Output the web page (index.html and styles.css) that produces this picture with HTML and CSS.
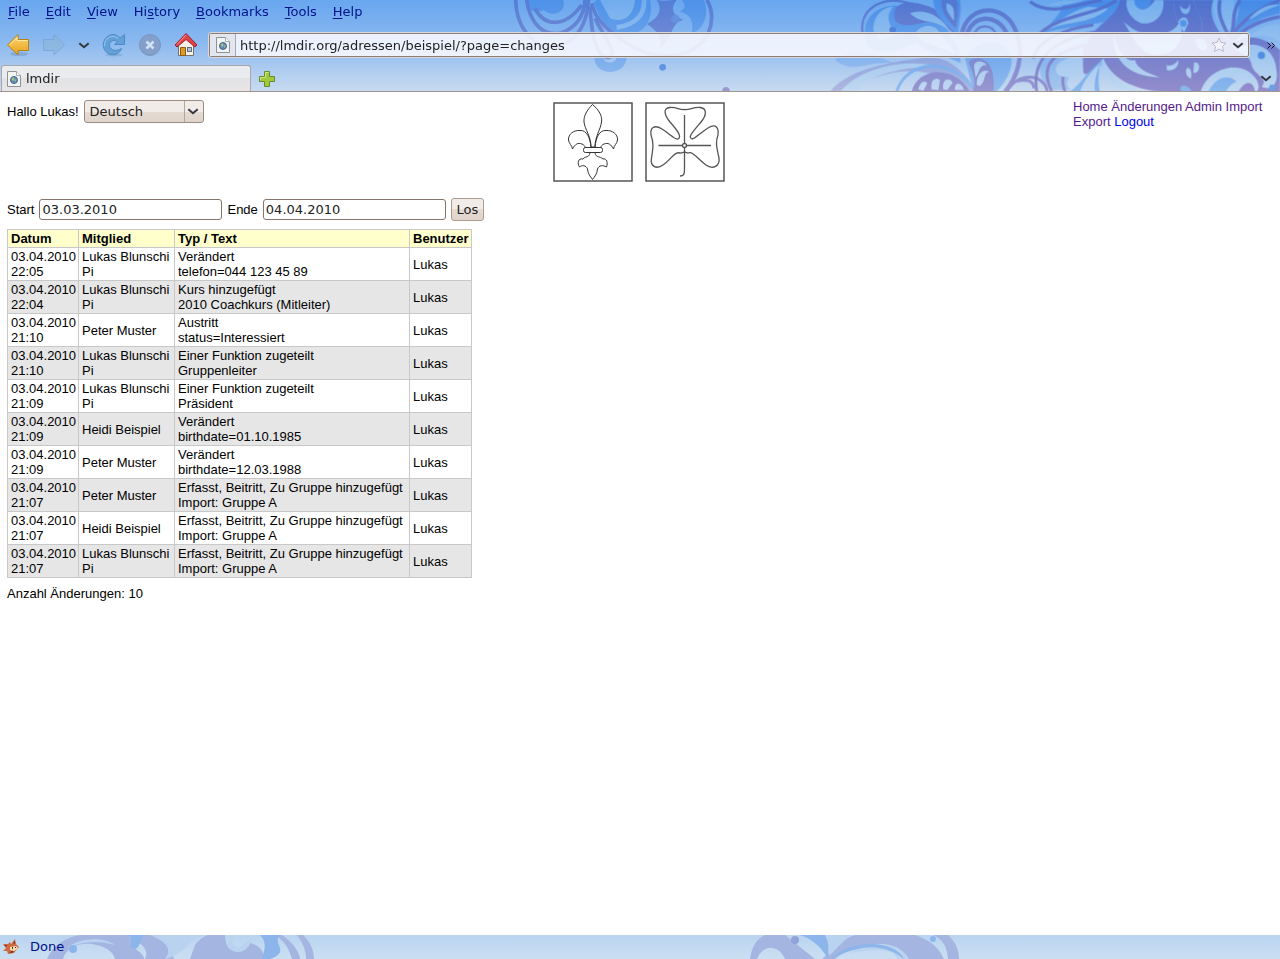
FILE: index.html
```html
<!DOCTYPE html>
<html lang="de">
<head>
    <meta charset="UTF-8">
    <meta name="viewport" content="width=device-width, initial-scale=1.0">
    <title>lmdir</title>
    <link rel="stylesheet" href="styles.css">
</head>
<body>
    <svg width="0" height="0" class="defs">
        <defs>
            <linearGradient id="indigo" gradientUnits="userSpaceOnUse" x1="0" y1="0" x2="0" y2="275">
                <stop offset="0" stop-color="#4a68c8"/><stop offset="1" stop-color="#8a7fc6"/>
            </linearGradient>
            <linearGradient id="blue" gradientUnits="userSpaceOnUse" x1="0" y1="0" x2="0" y2="275">
                <stop offset="0" stop-color="#3f86e6"/><stop offset="1" stop-color="#80b2ee"/>
            </linearGradient>
            <linearGradient id="pale" gradientUnits="userSpaceOnUse" x1="0" y1="0" x2="0" y2="275">
                <stop offset="0" stop-color="#76b0ee"/><stop offset="1" stop-color="#c0d8f2"/>
            </linearGradient>
            <linearGradient id="gold" x1="0" y1="0" x2="0" y2="1">
                <stop offset="0" stop-color="#fbd66e"/><stop offset="1" stop-color="#e8a21c"/>
            </linearGradient>
            <symbol id="chevron" viewBox="0 0 10 6">
                <path d="M1 1 L5 4.5 L9 1" fill="none" stroke="#33383f" stroke-width="1.700"/>
            </symbol>
            <symbol id="page" viewBox="0 0 16 18">
                <path d="M1.500 1.500 H10.500 L14.500 5.500 V16.500 H1.500 Z" fill="#f2f4f4" stroke="#8b9396"/>
                <path d="M10.500 1.500 V5.500 H14.500" fill="#fff" stroke="#a3aaac"/>
                <circle cx="8" cy="10" r="3.500" fill="#6189bd" stroke="#4c678c"/>
                <path d="M5.500 9 L7.500 7 L8.500 9 L7 11 Z M8.500 10 L10.500 9 L9.500 12 Z" fill="#a9c977"/>
            </symbol>
        </defs>
    </svg>

    <header class="chrome">
        <svg class="ornament" viewBox="480 0 800 92" preserveAspectRatio="xMaxYMin slice" aria-hidden="true">
            <!-- flower hanging down in the middle -->
            <g transform="translate(500) scale(.3333)" opacity=".65" fill="none">
                <path d="M75 0 H190 C200 45 150 50 130 30 C105 45 80 30 75 0 Z" fill="url(#blue)"/>
                <path d="M290 0 H450 C465 75 420 105 360 115 C320 100 300 50 280 10 Z" fill="url(#blue)"/>
                <path d="M300 0 H405 C400 50 370 70 330 55 Z" fill="url(#pale)"/>
                <path d="M350 82 C410 75 435 40 432 0" stroke="url(#pale)" stroke-width="14"/>
                <g stroke="url(#indigo)" stroke-width="11">
                    <path d="M47 0 C50 90 110 160 185 135 C245 112 262 55 265 0"/>
                    <path d="M80 0 C90 70 130 112 185 98 C235 80 252 40 255 0"/>
                    <path d="M105 25 C130 75 190 90 245 15"/>
                    <path d="M275 10 C285 60 330 100 390 135 C460 180 580 185 625 100 C640 65 638 25 620 0"/>
                    <path d="M270 20 C275 100 285 170 325 173 C360 165 305 100 285 55"/>
                </g>
                <path d="M470 0 C495 5 510 0 530 0 C515 20 510 40 550 60 C515 65 520 110 480 145 C490 115 470 90 440 72 C475 55 490 30 470 0 Z" fill="url(#indigo)"/>
                <path d="M545 0 H610 C630 30 615 90 575 100 C585 60 565 40 540 35 C560 25 555 10 545 0 Z" fill="url(#blue)"/>
                <circle cx="526" cy="57" r="13" fill="#5b83d5"/>
                <path d="M283 173 C285 230 375 230 380 173 H350 C345 195 310 190 310 173 Z" fill="url(#blue)"/>
                <circle cx="488" cy="202" r="10" fill="#3977de"/>
                <path d="M667 275 C665 256 690 256 690 275 Z" fill="#8177bd"/>
            </g>
            <!-- small flower -->
            <g transform="translate(830) scale(.3333)" opacity=".75" fill="none">
                <path d="M105 100 C100 30 180 0 250 25 C320 40 350 70 370 130 C280 90 230 160 170 150 C120 160 100 130 105 100 Z" fill="url(#blue)"/>
                <path d="M198 65 C180 25 210 0 260 10 C315 20 360 45 380 105 L340 75 C280 50 240 95 198 65 Z" fill="url(#indigo)"/>
                <path d="M240 40 C290 20 340 55 360 95 C320 55 275 75 240 40 Z M130 90 C130 45 160 20 190 20 C165 45 175 80 205 105 C160 110 155 140 130 90 Z" fill="url(#pale)"/>
                <path d="M98 100 C85 25 160 -15 240 10 C320 18 360 60 385 110" stroke="url(#indigo)" stroke-width="7"/>
                <path d="M310 0 H390 C397 40 385 70 384 105 C350 75 310 45 310 0 Z" fill="url(#blue)"/>
                <path d="M335 0 H380 C390 35 380 60 378 85 C350 60 330 30 335 0 Z" fill="url(#indigo)"/>
                <path d="M350 10 C375 15 372 35 372 62 C358 45 345 30 350 10 Z" fill="url(#pale)"/>
                <path d="M235 105 C265 50 330 60 350 100 C380 125 390 145 392 190 C340 160 290 170 235 105 Z" fill="url(#blue)"/>
                <path d="M255 100 C280 65 320 75 330 100 C345 120 360 130 375 165 C330 130 290 145 255 100 Z" fill="url(#pale)"/>
                <path d="M395 105 C410 10 530 5 560 100 C585 165 560 235 525 275" stroke="url(#indigo)" stroke-width="13"/>
                <path d="M410 110 C420 45 500 35 530 100" stroke="url(#indigo)" stroke-width="13"/>
                <path d="M430 110 C440 70 485 70 500 105" stroke="url(#indigo)" stroke-width="7"/>
                <path d="M405 175 C450 100 545 120 545 185 C540 230 520 250 500 275 H430 Z" fill="url(#blue)"/>
                <path d="M15 180 C60 140 130 160 190 190 C110 180 70 225 15 180 Z" fill="url(#blue)" opacity=".6"/>
                <path d="M0 275 C60 200 200 185 300 170 C360 175 405 215 440 275 H395 C350 215 240 200 160 225 C110 240 70 260 50 275 Z" fill="url(#indigo)" opacity=".5"/>
                <path d="M30 275 C110 185 260 180 320 200 C250 200 130 210 80 275 Z" fill="url(#pale)"/>
                <path d="M200 275 C230 175 370 175 425 262" stroke="url(#blue)" stroke-width="9"/>
                <path d="M245 275 C260 205 370 190 420 275 Z" fill="url(#indigo)"/>
                <path d="M265 268 C270 245 285 240 292 250 L280 272 Z M305 268 C300 238 318 230 330 240 L325 270 Z M340 268 C335 235 360 232 368 248 L352 270 Z M375 270 C372 245 395 245 402 270 Z" fill="url(#pale)"/>
                <path d="M415 185 C450 160 500 180 490 275 H430 C440 240 425 210 415 185 Z" fill="url(#indigo)"/>
                <path d="M432 200 C432 180 460 180 470 195 C445 195 450 215 437 232 Z M440 255 C440 220 460 205 478 215 C458 220 470 240 450 258 Z" fill="url(#pale)"/>
                <path d="M530 275 C560 215 645 220 652 275 M550 245 C590 235 610 240 612 265" stroke="url(#indigo)" stroke-width="9"/>
                <circle cx="188" cy="90" r="10" fill="#4272d2"/>
            </g>
            <!-- large flower in the right corner -->
            <g transform="translate(1030) scale(.3333)" opacity=".85" fill="none">
                <path d="M90 0 H290 L240 60 C180 80 130 75 35 100 C80 50 110 25 90 0 Z" fill="url(#blue)"/>
                <path d="M175 20 C130 30 90 60 55 88 C120 60 180 75 235 25 Z M100 0 H170 C120 15 80 20 45 18 Z" fill="url(#pale)"/>
                <path d="M0 5 C60 50 130 15 215 0 M30 100 C100 40 190 50 260 0" stroke="url(#indigo)" stroke-width="10"/>
                <path d="M40 170 C130 150 190 110 235 40 L215 200 C160 170 80 245 125 270 H70 C30 250 20 210 40 170 Z" fill="url(#blue)" opacity=".5"/>
                <path d="M10 175 C20 120 110 85 190 75 M20 275 C5 180 60 120 200 95 M65 275 C20 180 90 150 190 130 M105 275 C80 210 130 170 205 165" stroke="url(#indigo)" stroke-width="9"/>
                <path d="M180 160 C130 170 60 180 82 222 C105 238 105 225 118 232 C150 225 165 205 180 160 Z" fill="url(#pale)"/>
                <path d="M210 170 C180 205 165 240 120 275 H210 C200 235 210 210 210 170 Z" fill="url(#blue)"/>
                <path d="M210 190 C170 225 160 250 150 275 H195 C190 245 200 220 210 190 Z" fill="url(#pale)"/>
                <path d="M270 0 H430 C430 50 455 110 500 115 C540 80 495 30 490 0 H550 C530 45 565 110 610 130 C650 100 700 110 750 150 V275 H420 C340 275 250 250 220 175 C165 220 155 265 160 150 C190 70 260 60 270 0 Z" fill="url(#indigo)"/>
                <path d="M220 175 C235 250 310 275 400 275 H280 C240 250 220 225 220 175 Z" fill="url(#pale)"/>
                <path d="M430 0 H490 C495 30 540 80 500 115 C455 110 430 50 430 0 Z" fill="url(#indigo)"/>
                <path d="M280 65 C310 110 320 150 365 163 C430 175 470 125 450 60 C440 100 385 110 345 100 C310 95 295 75 280 65 Z" fill="url(#pale)"/>
                <path d="M250 95 C245 170 285 230 390 232 C350 220 320 205 315 180 C285 190 255 140 250 95 Z M410 195 C420 200 435 195 445 180 C448 205 425 215 410 210 Z" fill="url(#pale)"/>
                <path d="M290 0 H325 C320 30 350 40 375 0 H400 C405 50 370 75 335 70 C305 60 285 30 290 0 Z" fill="url(#pale)"/>
                <circle cx="338" cy="4" r="25" fill="url(#blue)"/>
                <path d="M450 15 C455 30 480 35 478 8 C490 50 450 55 450 15 Z M445 65 C455 45 475 50 475 70 L462 98 Z M495 120 C515 110 535 125 530 145 C515 160 500 145 495 120 Z M470 205 C480 200 487 215 483 235 C468 230 465 215 470 205 Z M492 188 C515 180 510 225 490 218 Z" fill="url(#pale)"/>
                <circle cx="460" cy="70" r="10" fill="url(#blue)"/>
                <path d="M550 0 H610 C620 50 600 90 590 110 C570 75 545 40 550 0 Z" fill="url(#pale)"/>
                <path d="M625 0 H750 V40 C700 50 650 70 610 120 C605 80 635 40 625 0 Z" fill="url(#blue)"/>
                <path d="M570 0 C560 45 580 75 600 115 C620 70 600 45 630 0 M600 115 C635 60 680 30 750 0 M605 125 C650 75 700 60 750 50" stroke="url(#indigo)" stroke-width="11"/>
                <path d="M655 60 C680 30 710 10 750 15 C700 30 680 50 655 60 Z" fill="url(#pale)"/>
                <path d="M650 115 C685 85 715 72 750 72 V125 C720 105 685 100 650 115 Z" fill="url(#pale)"/>
                <path d="M615 148 C660 120 735 130 740 215 C745 250 725 275 695 260 C720 235 670 225 665 195 C660 165 635 160 615 148 Z" fill="url(#pale)"/>
                <circle cx="694" cy="166" r="11" fill="#4784e0"/>
                <circle cx="727" cy="263" r="10" fill="#5e95e5"/>
                <path d="M512 275 C535 200 640 175 680 240 C690 260 685 270 680 275 Z" fill="url(#pale)"/>
                <path d="M535 275 C560 225 600 225 620 245 C605 250 590 265 590 275 Z" fill="url(#blue)"/>
                <path d="M625 275 C645 240 670 240 675 275 Z" fill="url(#indigo)"/>
                <path d="M455 275 C440 255 470 245 485 275 Z" fill="url(#blue)"/>
            </g>
        </svg>

        <nav class="menubar">
            <button><u>F</u>ile</button>
            <button><u>E</u>dit</button>
            <button><u>V</u>iew</button>
            <button>Hi<u>s</u>tory</button>
            <button><u>B</u>ookmarks</button>
            <button><u>T</u>ools</button>
            <button><u>H</u>elp</button>
        </nav>

        <div class="toolbar">
            <button class="tool" aria-label="Back">
                <svg width="24" height="24" viewBox="0 0 24 24"><ellipse cx="13" cy="21" rx="9" ry="2" fill="#49699a" opacity=".25"/><path d="M1.500 12 L12 1.500 V6.500 H22.500 V17.500 H12 V22 Z" fill="url(#gold)" stroke="#b98012"/><path d="M3.500 12 L11 4.500 V7.500 H21.500" fill="none" stroke="#fdeaa8"/></svg>
            </button>
            <button class="tool" aria-label="Forward">
                <svg width="24" height="24" viewBox="0 0 24 24" opacity=".65"><path d="M22.500 12 L12 1.500 V6.500 H1.500 V17.500 H12 V22 Z" fill="#8bb5d9" stroke="#719fc9"/></svg>
            </button>
            <button class="tool narrow" aria-label="Recent pages">
                <svg width="12" height="7"><use href="#chevron"/></svg>
            </button>
            <button class="tool" aria-label="Reload">
                <svg width="24" height="24" viewBox="0 0 24 24"><ellipse cx="12" cy="22" rx="9" ry="1.500" fill="#49699a" opacity=".2"/><path d="M18 5 L22.500 1.500 V11.500 H12.500 L15.500 8.500 C11 5.500 7 9 7.500 13 C8.500 18 15 18.500 19.500 15.500 C18 21 11 23.500 6 20.500 C-1 16 0 6 7 2.500 C11 .5 15 1.500 18 5 Z" fill="#62a0d7" stroke="#4c8cc6"/><path d="M2.500 13 C2 5 10 .5 16.500 5.500" fill="none" stroke="#9bc6ea"/></svg>
            </button>
            <button class="tool" aria-label="Stop">
                <svg width="24" height="24" viewBox="0 0 24 24"><circle cx="12" cy="12" r="10.500" fill="#839fca" stroke="#7895c3"/><path d="M8.500 8.500 L15.500 15.500 M15.500 8.500 L8.500 15.500" stroke="#d3e3f7" stroke-width="2.500"/></svg>
            </button>
            <button class="tool" aria-label="Home">
                <svg width="24" height="24" viewBox="0 0 24 24"><path d="M4.500 9 L12 3 L19.500 9 V22.500 H4.500 Z" fill="#f1f0eb" stroke="#77736a"/><path d="M6.500 14.500 H11.500 V22.500 H6.500 Z" fill="#dd9825" stroke="#8e5c13"/><rect x="13.500" y="14.500" width="4" height="4" fill="#a9c4e0" stroke="#686d70"/><path d="M12 .5 L23 12 L21 14 L12 6.500 L3 14 L1 12 Z" fill="#df4347" stroke="#a51d24"/><path d="M12 2 L3 11.500" stroke="#f59595"/></svg>
            </button>
            <div class="location">
                <span class="site"><svg width="16" height="18"><use href="#page"/></svg></span>
                <input type="text" aria-label="Location" value="http://lmdir.org/adressen/beispiel/?page=changes">
                <svg width="16" height="16" viewBox="0 0 16 16"><path d="M8 1 L10 5.500 L15 6 L11.500 9.500 L12.500 14.500 L8 12 L3.500 14.500 L4.500 9.500 L1 6 L6 5.500 Z" fill="#f1f2fa" stroke="#b9bbcb"/></svg>
                <svg width="12" height="7"><use href="#chevron"/></svg>
            </div>
            <button class="overflow" aria-label="More">
                <svg width="8" height="7" viewBox="0 0 8 7"><path d="M.5 .5 L3.500 3.500 L.5 6.500 M4.500 .5 L7.500 3.500 L4.500 6.500" fill="none" stroke="#111"/></svg>
            </button>
        </div>

        <div class="tabs">
            <button class="tab"><svg width="16" height="18"><use href="#page"/></svg>lmdir</button>
            <button class="new-tab" aria-label="New tab">
                <svg width="16" height="16" viewBox="0 0 16 16"><path d="M5.500 .5 H10.500 V5.500 H15.500 V10.500 H10.500 V15.500 H5.500 V10.500 H.5 V5.500 H5.500 Z" fill="#a3c93a" stroke="#648c2c"/><path d="M6.500 6.500 V1.500 H9.500 M1.500 9 V6.500 H6" fill="none" stroke="#d3e58b"/></svg>
            </button>
            <button class="all-tabs" aria-label="List all tabs">
                <svg width="12" height="7"><use href="#chevron"/></svg>
            </button>
        </div>
    </header>

    <main>
        <div class="top">
            <div class="greeting">
                <label for="language">Hallo Lukas!</label>
                <div class="dropdown">
                    <select id="language"><option>Deutsch</option></select>
                    <svg width="12" height="7"><use href="#chevron"/></svg>
                </div>
            </div>
            <div class="logos">
                <svg width="80" height="80" viewBox="0 0 80 80" fill="none" stroke="#333">
                    <rect x="1" y="1" width="78" height="78" stroke="#555" stroke-width="1.500"/>
                    <path d="M39.500 2.500 C46 8 49.500 14 48.500 20 C47.500 28 42 34 42 45 H38 C38 34 32 28 31 20 C30.500 14 34 8 39.500 2.500 Z"/>
                    <path d="M38 45 C37 36 34 28 27 28.500 C21 28 15 32 15.500 38 C16 42 19 43 19.500 47 C22 42 25 40.500 29 42 C31 43 32 44 32.500 46"/>
                    <path d="M42 45 C43 36 46 28 53 28.500 C59 28 65 32 64.500 38 C64 42 61 43 60.500 47 C58 42 55 40.500 51 42 C49 43 48 44 47.500 46"/>
                    <rect x="30.500" y="45.500" width="19" height="5" rx="2"/>
                    <path d="M37 51 C36 56 32 54 30 57 C25 56 24 61 26.500 65 C29 63 33 63 34.500 67 C35 72 37 74 39.500 77.500 C42 74 44 72 44.500 67 C46 63 50 63 53.500 65 C55 61 54 56 50 57 C47 54 43 56 42 51"/>
                </svg>
                <svg width="80" height="80" viewBox="0 0 80 80" fill="none" stroke="#555" stroke-width="1.300">
                    <rect x="1" y="1" width="78" height="78" stroke="#555" stroke-width="1.500"/>
                    <path d="M33 37 C37 35 33 29 25 20 C20 14 17 6 25 5.500 C32 5 34 8 39.500 7.500 C45 8 48 5 55 5.500 C62 6 62 13 56 20 C46 32 43 35 47 37 C50 37 55 31 63 26 C71 21 74 26 73 33 C70 41 72 46 74 56 C75 64 68 68 61 63 C53 57 48 49 43 51 L39.500 50 L36 51 C29 49 26 58 18 63 C11 68 5 64 6.500 56 C8 46 9 41 6 33 C5 26 9 22 17 27 C25 32 30 38 33 37 Z"/>
                    <path d="M39.500 13 V67 C39.500 72 39 74 35 74 M13.500 43.500 H66"/>
                    <circle cx="39.500" cy="43.500" r="2" fill="#fff"/>
                </svg>
            </div>
            <nav class="links">
                <a class="visited" href="#home">Home</a>
                <a class="visited" href="#changes">Änderungen</a>
                <a class="visited" href="#admin">Admin</a>
                <a class="visited" href="#import">Import</a>
                <a class="visited" href="#export">Export</a>
                <a href="#logout">Logout</a>
            </nav>
        </div>

        <form class="range">
            <label for="start">Start</label>
            <input type="text" id="start" value="03.03.2010">
            <label for="end">Ende</label>
            <input type="text" id="end" value="04.04.2010">
            <button type="button">Los</button>
        </form>

        <table>
            <thead>
                <tr><th class="date">Datum</th><th class="member">Mitglied</th><th class="text">Typ / Text</th><th class="user">Benutzer</th></tr>
            </thead>
            <tbody>
                <tr><td>03.04.2010 22:05</td><td>Lukas Blunschi<br>Pi</td><td>Verändert<br>telefon=044 123 45 89</td><td>Lukas</td></tr>
                <tr><td>03.04.2010 22:04</td><td>Lukas Blunschi<br>Pi</td><td>Kurs hinzugefügt<br>2010 Coachkurs (Mitleiter)</td><td>Lukas</td></tr>
                <tr><td>03.04.2010 21:10</td><td>Peter Muster</td><td>Austritt<br>status=Interessiert</td><td>Lukas</td></tr>
                <tr><td>03.04.2010 21:10</td><td>Lukas Blunschi<br>Pi</td><td>Einer Funktion zugeteilt<br>Gruppenleiter</td><td>Lukas</td></tr>
                <tr><td>03.04.2010 21:09</td><td>Lukas Blunschi<br>Pi</td><td>Einer Funktion zugeteilt<br>Präsident</td><td>Lukas</td></tr>
                <tr><td>03.04.2010 21:09</td><td>Heidi Beispiel</td><td>Verändert<br>birthdate=01.10.1985</td><td>Lukas</td></tr>
                <tr><td>03.04.2010 21:09</td><td>Peter Muster</td><td>Verändert<br>birthdate=12.03.1988</td><td>Lukas</td></tr>
                <tr><td>03.04.2010 21:07</td><td>Peter Muster</td><td>Erfasst, Beitritt, Zu Gruppe hinzugefügt<br>Import: Gruppe A</td><td>Lukas</td></tr>
                <tr><td>03.04.2010 21:07</td><td>Heidi Beispiel</td><td>Erfasst, Beitritt, Zu Gruppe hinzugefügt<br>Import: Gruppe A</td><td>Lukas</td></tr>
                <tr><td>03.04.2010 21:07</td><td>Lukas Blunschi<br>Pi</td><td>Erfasst, Beitritt, Zu Gruppe hinzugefügt<br>Import: Gruppe A</td><td>Lukas</td></tr>
            </tbody>
        </table>
        <p>Anzahl Änderungen: 10</p>
    </main>

    <footer class="statusbar">
        <svg class="ornament" viewBox="0 0 1280 24" preserveAspectRatio="xMinYMin slice" aria-hidden="true">
            <g fill="#a3b5e0">
                <path d="M47 24 C55 5 75 -3 100 0 H192 C180 8 170 16 174 24 H145 C150 14 140 8 130 0 C128 14 145 17 144 24 H115 C112 8 70 0 63 24 Z"/>
                <path d="M195 10 C205 -3 215 -2 225 0 C225 16 235 22 250 8 C260 10 265 18 264 24 H190 Z"/>
                <path d="M275 0 H282 C293 8 299 16 300 24 H292 C289 14 285 6 275 0 Z M297 0 H303 C311 8 314 16 314 24 H306 C306 16 303 8 297 0 Z"/>
                <path d="M750 24 C752 10 758 3 765 0 H785 C795 8 805 16 815 24 H785 C778 8 762 10 757 24 Z"/>
                <path d="M822 24 C838 10 845 3 855 0 H915 C935 7 940 16 944 24 H905 C900 5 850 10 835 24 Z M934 0 H948 C957 8 959 17 959 24 H948 C947 12 944 6 934 0 Z"/>
            </g>
            <g fill="#b9d2ef">
                <path d="M67 13 C80 2 104 2 115 10 C95 4 80 8 67 13 Z M150 0 H205 C185 5 190 17 165 24 C175 12 160 4 150 0 Z M233 0 C230 12 238 18 251 2 C252 15 236 24 227 10 Z"/>
                <path d="M806 0 H850 L830 20 Z M850 18 C870 4 900 6 909 24 H898 C890 10 865 16 850 18 Z"/>
            </g>
            <g fill="#8cb5ec">
                <path d="M130 0 H143 C140 8 138 18 131 12 Z M260 0 H281 C270 8 292 16 270 24 H262 C264 16 268 8 260 0 Z M800 0 H825 C830 9 828 16 828 24 C823 15 815 5 800 0 Z M830 24 C850 4 894 4 904 24 C880 5 855 12 830 24 Z"/>
                <circle cx="73" cy="14" r="4"/>
                <circle cx="933" cy="4" r="3"/>
            </g>
            <circle cx="795" cy="5" r="4" fill="#91a4d9"/>
        </svg>
        <svg class="fox" width="16" height="16" viewBox="0 0 16 16"><path d="M0 5 L5 5 L7 3 L8 5 L12 0 L13 5 L16 8 L13 11 L11 14 L5 15 L4 12 L0 12 L3 9 Z" fill="#cf6940"/><path d="M1 6 L4 6 L3 8 Z M10 4 L12 2 V5 Z" fill="#7d372a"/><path d="M7 8 L13 7 L15 9 L11 12 L7 11 Z" fill="#ffe0b0"/><path d="M9 8 H10 V10 H9 Z M12 8 H13 V9 H12 Z M6 14 L9 12 L11 13 Z" fill="#40241f"/></svg>
        <span>Done</span>
    </footer>
</body>
</html>
```
FILE: styles.css
```css
body {
    margin: 0;
    min-height: 100vh;
    display: flex;
    flex-direction: column;
    background: #fff;
    color: #000;
    font: 13px/15px "Liberation Sans", Arial, sans-serif;
}
button, input, select {
    font: 13px/16px "DejaVu Sans", sans-serif;
    color: #222;
    box-sizing: border-box;
    margin: 0;
}
.defs {
    position: absolute;
}
svg {
    display: block;
    flex-shrink: 0;
}

/* browser chrome */
.chrome {
    position: relative;
    background: linear-gradient(#68a6ef, #8ab8ef 45%, #c8daf0);
    border-bottom: 1px solid #a09890;
}
.chrome button {
    border: 0;
    padding: 0;
    background: none;
}
.ornament {
    position: absolute;
    top: 0;
    height: 100%;
}
.chrome .ornament {
    right: 0;
    width: 800px;
}
.menubar, .toolbar, .tabs {
    position: relative;
    display: flex;
    align-items: center;
}
.menubar {
    height: 24px;
    gap: 16px;
    padding: 0 8px;
}
.chrome .menubar button {
    color: #00128a;
}
.menubar u {
    text-underline-offset: 2px;
}
.toolbar {
    height: 42px;
    padding-left: 6px;
    gap: 12px;
}
.tool {
    width: 24px;
}
.tool.narrow {
    width: 12px;
}
.location {
    flex: 1;
    display: flex;
    align-items: center;
    height: 24px;
    margin-left: -1px;
    gap: 5px;
    padding-right: 4px;
    box-sizing: border-box;
    border: 1px solid #8b7c74;
    border-radius: 2px;
    outline: 1px solid #d8d6df;
    background: rgba(250, 250, 255, .86);
}
.location .site {
    display: flex;
    align-items: center;
    height: 22px;
    padding: 0 4px 0 5px;
    border-right: 1px solid #aaa6ad;
    background: #e3e5ef;
}
.location input {
    flex: 1;
    min-width: 0;
    height: 20px;
    padding: 0;
    margin-left: -1px;
    border: 0;
    background: none;
}
.overflow {
    margin: 0 5px 0 6px;
}
.tabs {
    height: 25px;
    padding-left: 1px;
}
.chrome .tab {
    display: flex;
    align-items: center;
    gap: 4px;
    width: 250px;
    height: 26px;
    margin-top: -1px;
    padding: 0 4px;
    border: 1px solid #a8a6a8;
    border-bottom: 0;
    border-radius: 3px 3px 0 0;
    background: linear-gradient(#e9ebee 50%, #e2e2e5 50%, #e8e5e5);
}
.new-tab {
    margin-left: 8px;
}
.all-tabs {
    margin: 0 8px 0 auto;
}

/* page */
main {
    flex: 1;
    padding: 8px 9px 8px 7px;
}
.top {
    display: grid;
    grid-template-columns: 1fr auto 1fr;
    align-items: start;
    margin-bottom: 16px;
}
.greeting, .range {
    display: flex;
    align-items: center;
    gap: 5px;
}
.dropdown {
    position: relative;
}
.dropdown select {
    appearance: none;
    display: block;
    width: 120px;
    height: 23px;
    padding: 0 5px;
    border: 1px solid #9b8b80;
    border-radius: 3px;
    background: linear-gradient(90deg, transparent 99px, #b5a69c 99px, #b5a69c 100px, transparent 100px), linear-gradient(#f2ece8 50%, #e5dbd4 50%, #e0d4cb);
}
.dropdown svg {
    position: absolute;
    right: 5px;
    top: 8px;
    pointer-events: none;
}
.logos {
    display: flex;
    gap: 12px;
    padding-top: 2px;
}
.links {
    justify-self: end;
    width: 198px;
    margin-top: -1px;
}
.links a {
    color: #0000ee;
    text-decoration: none;
}
.links .visited {
    color: #551a8b;
}
.range {
    margin-bottom: 8px;
}
.range input {
    width: 183px;
    height: 21px;
    padding: 0 2px;
    border: 1px solid #85756b;
    border-radius: 3px;
    background: #fff;
}
.range button {
    width: 33px;
    height: 23px;
    padding: 0;
    border: 1px solid #ab9b91;
    border-radius: 3px;
    background: linear-gradient(#f2ece8 50%, #e5dbd4 50%, #e0d4cb);
}
table {
    border-collapse: collapse;
    table-layout: fixed;
    width: 465px;
}
th, td {
    padding: 1px 3px;
    border: 1px solid #c8c8c8;
    text-align: left;
}
th {
    background: #ffffcc;
}
tbody tr:nth-child(even) {
    background: #e6e6e6;
}
.date {
    width: 64px;
}
.member {
    width: 89px;
}
.text {
    width: 228px;
}
.user {
    width: 55px;
}
p {
    margin: 8px 0;
}

.statusbar {
    position: relative;
    display: flex;
    align-items: center;
    gap: 11px;
    height: 24px;
    padding-left: 3px;
    background: linear-gradient(#b9d4f0, #cbdff2);
    color: #00128a;
    font: 13px/16px "DejaVu Sans", sans-serif;
}
.statusbar .ornament {
    left: 0;
    width: 1280px;
    max-width: 100%;
}
.statusbar .fox, .statusbar span {
    position: relative;
}
```
